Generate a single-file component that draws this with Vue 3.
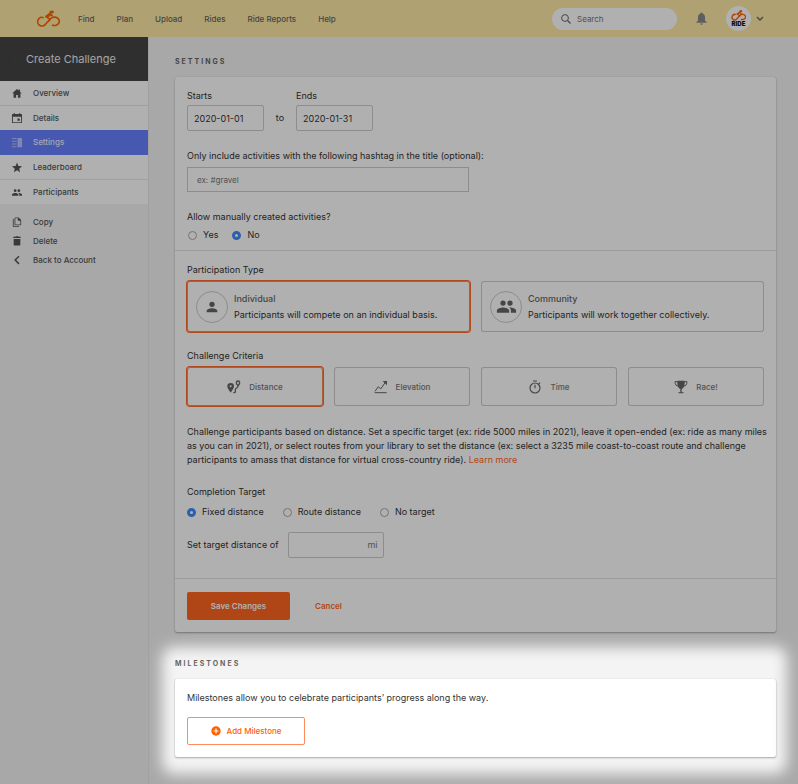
<script setup>
import { ref } from 'vue'

const nav = ['Find', 'Plan', 'Upload', 'Rides', 'Ride Reports', 'Help']
const items = [
  { name: 'Overview', icon: 'home' },
  { name: 'Details', icon: 'calendar' },
  { name: 'Settings', icon: 'reader' },
  { name: 'Leaderboard', icon: 'star' },
  { name: 'Participants', icon: 'group' }
]
const actions = [
  { name: 'Copy', icon: 'copy' },
  { name: 'Delete', icon: 'trash' },
  { name: 'Back to Account', icon: 'back' }
]
const icons = {
  home: 'M12 2 1.500 11.500h3V21h5.500v-6h4v6h5.500v-9.500h3L18.500 8V3.500h-3v1.700z',
  calendar: 'M18 12h-5v5h5v-5zM17 0v2H7V0H5v2H3a2 2 0 0 0-2 2v16a2 2 0 0 0 2 2h18a2 2 0 0 0 2-2V4a2 2 0 0 0-2-2h-2V0h-2zm4 20H3V8h18v12z',
  reader: 'M1 2h10v2.500H1zm0 6h10v2.500H1zm0 6h10v2.500H1zm0 6h10v2.500H1zM13 2h10v20.500H13z',
  star: 'M12 18 18.800 22.500l-2-8L23 9.200l-8-.6L12 1 9 8.600 1 9.200l6.200 5.300-2 8z',
  group: 'M16 11a3 3 0 1 0 0-6 3 3 0 0 0 0 6zm-8 0a3 3 0 1 0 0-6 3 3 0 0 0 0 6zm0 2c-2.300 0-7 1.200-7 3.500V19h14v-2.500C15 14.200 10.300 13 8 13zm8 0-1 .1c1.200.8 2 2 2 3.400V19h6v-2.500c0-2.300-4.700-3.500-7-3.500z',
  copy: 'M8 1h8l6 6v11a2 2 0 0 1-2 2H8a2 2 0 0 1-2-2V3a2 2 0 0 1 2-2zm0 2v15h12V9h-6V3H8zM2 5h2v17h13v2H4a2 2 0 0 1-2-2V5z',
  trash: 'M4 7h16v14a2 2 0 0 1-2 2H6a2 2 0 0 1-2-2V7zM3 2h5l1-1.500h6L16 2h5v3H3z',
  back: 'M15.500 1.500 18 4l-8 8 8 8-2.500 2.500L5 12z',
  person: 'M12 12a4 4 0 1 0 0-8 4 4 0 0 0 0 8zm0 2c-2.700 0-8 1.300-8 4v2h16v-2c0-2.700-5.300-4-8-4z'
}
const types = [
  { name: 'Individual', icon: 'person', text: 'Participants will compete on an individual basis.' },
  { name: 'Community', icon: 'group', text: 'Participants will work together collectively.' }
]
const criteria = ['Distance', 'Elevation', 'Time', 'Race!']
const targets = ['Fixed distance', 'Route distance', 'No target']

const starts = ref('2020-01-01')
const ends = ref('2020-01-31')
const manual = ref('No')
const type = ref('Individual')
const criterion = ref('Distance')
const target = ref('Fixed distance')
</script>

<template>
  <div class="page">
    <header class="topbar">
      <a href="#" class="logo" aria-label="Home">
        <svg viewBox="0 0 72 52" fill="none" stroke="currentColor" stroke-width="5">
          <path d="M23 22A13 13 0 1 0 29 41L42 27 30 19 41 11 50 17" stroke-linejoin="round" />
          <path d="M40 33A15 12.500 0 1 1 48 44" />
          <path d="M27 19 41 8 47 11 37 21z" fill="currentColor" stroke-width="2" />
          <ellipse cx="47" cy="5" rx="7" ry="4.500" fill="currentColor" stroke="none" />
        </svg>
      </a>
      <nav class="nav"><a v-for="n in nav" :key="n" href="#">{{ n }}</a></nav>
      <label class="search">
        <svg viewBox="0 0 10 10" fill="none" stroke="currentColor"><circle cx="4" cy="4" r="3.400" /><path d="m6.500 6.500 3 3" stroke-width="1.200" /></svg>
        <input type="search" placeholder="Search" aria-label="Search" />
      </label>
      <button class="bell" aria-label="Notifications">
        <svg viewBox="0 0 24 24" fill="currentColor"><path d="M12 1c1 0 1.800.7 1.800 1.700 3 .8 4.700 3.500 4.700 6.800v6.500l3 2.500v1.500h-19v-1.500l3-2.500V9.500c0-3.300 1.700-6 4.700-6.800C10.200 1.700 11 1 12 1zM9.500 21h5a2.500 2.500 0 0 1-5 0z" /></svg>
      </button>
      <button class="account" aria-label="Account">
        <span class="avatar">
          <svg viewBox="0 0 72 52" fill="none" stroke="currentColor" stroke-width="7">
            <path d="M23 22A13 13 0 1 0 29 41L42 27 30 19 41 11 50 17" />
            <path d="M40 33A15 12.500 0 1 1 48 44" />
            <ellipse cx="47" cy="5" rx="7" ry="5" fill="currentColor" stroke="none" />
          </svg>
          <b>RIDE</b>
        </span>
        <svg class="chev" viewBox="0 0 8 6" fill="none" stroke="currentColor" stroke-width="1.400"><path d="m1 1 3 3 3-3" /></svg>
      </button>
    </header>

    <div class="body">
      <aside class="side">
        <h1 class="title">
          <svg viewBox="0 0 148 43" preserveAspectRatio="none" fill="none" stroke="currentColor">
            <path d="M0 8Q12 12 17 0M0 17Q20 16 27 0M0 26Q28 20 38 0M40 43Q50 24 72 30T104 43M28 43Q44 14 74 22T116 43M148 4Q120 0 117 18T132 43M148 11Q127 8 124 22T140 43M148 18Q134 17 132 26T147 43M108 0Q106 24 124 43M98 0Q96 20 116 43" />
          </svg>
          <span>Create Challenge</span>
        </h1>
        <nav class="menu">
          <a v-for="i in items" :key="i.name" href="#" :class="{ active: i.name === 'Settings' }">
            <svg viewBox="0 0 24 24" fill="currentColor"><path :d="icons[i.icon]" fill-rule="evenodd" /></svg>{{ i.name }}
          </a>
        </nav>
        <nav class="actions">
          <a v-for="a in actions" :key="a.name" href="#">
            <svg viewBox="0 0 24 24" fill="currentColor"><path :d="icons[a.icon]" fill-rule="evenodd" /></svg>{{ a.name }}
          </a>
        </nav>
      </aside>

      <main class="main">
        <section>
          <h2>Settings</h2>
          <form class="card" @submit.prevent>
            <div class="part first">
              <div class="dates">
                <div class="field"><label for="starts">Starts</label><input id="starts" v-model="starts" type="text" /></div>
                <span class="to">to</span>
                <div class="field"><label for="ends">Ends</label><input id="ends" v-model="ends" type="text" /></div>
              </div>
              <label class="line gap" for="tag">Only include activities with the following hashtag in the title (optional):</label>
              <input id="tag" class="tag" type="text" placeholder="ex: #gravel" />
              <p class="line gap">Allow manually created activities?</p>
              <div class="radios manual">
                <label v-for="m in ['Yes', 'No']" :key="m"><input v-model="manual" type="radio" name="manual" :value="m" />{{ m }}</label>
              </div>
            </div>

            <div class="part second">
              <p class="line">Participation Type</p>
              <div class="types">
                <button v-for="t in types" :key="t.name" type="button" class="option type" :class="{ on: type === t.name }" :aria-pressed="type === t.name" @click="type = t.name">
                  <span class="disc" :class="t.icon"><svg viewBox="0 0 24 24" fill="currentColor"><path :d="icons[t.icon]" /></svg></span>
                  <span class="words"><span class="name">{{ t.name }}</span><span>{{ t.text }}</span></span>
                </button>
              </div>
              <p class="line gap">Challenge Criteria</p>
              <div class="criteria">
                <button v-for="c in criteria" :key="c" type="button" class="option criterion" :class="{ on: criterion === c }" :aria-pressed="criterion === c" @click="criterion = c">
                  <svg v-if="c === 'Distance'" viewBox="0 0 42 42">
                    <path d="M11 9a10 10 0 0 1 10 10c0 7-10 19-10 19S1 26 1 19A10 10 0 0 1 11 9zm0 7a3 3 0 1 0 0 6 3 3 0 0 0 0-6z" fill="currentColor" fill-rule="evenodd" />
                    <path d="M33 3a5 5 0 0 1 5 5c0 4-5 9-5 9s-5-5-5-9a5 5 0 0 1 5-5zM33 19c0 6-8 4-8 10 0 5 2 9-6 9" fill="none" stroke="currentColor" stroke-width="4" />
                  </svg>
                  <svg v-else-if="c === 'Elevation'" viewBox="0 0 42 42" fill="none" stroke="currentColor" stroke-width="3">
                    <path d="M2 38h36M3 34l10-14 7 7L34 7" /><path d="M26 3h13v13z" fill="currentColor" stroke="none" />
                  </svg>
                  <svg v-else-if="c === 'Time'" viewBox="0 0 42 42" fill="none" stroke="currentColor" stroke-width="3.500">
                    <circle cx="21" cy="24" r="15" /><path d="M15 3h12M21 14v11M32 12l4-4" />
                  </svg>
                  <svg v-else viewBox="0 0 42 42">
                    <path d="M10 2h22v8c0 11-5 16-9 17v10h6v3H13v-3h6V27c-4-1-9-6-9-17z" fill="currentColor" />
                    <path d="M11 5H3c0 9 4 13 10 13M31 5h8c0 9-4 13-10 13" fill="none" stroke="currentColor" stroke-width="3" />
                  </svg>
                  {{ c }}
                </button>
              </div>
              <p class="about">
                Challenge participants based on distance. Set a specific target (ex: ride 5000 miles in 2021), leave it open-ended (ex: ride as many miles as you can in 2021), or select routes from your library to set the distance (ex: select a 3235 mile coast-to-coast route and challenge participants to amass that distance for virtual cross-country ride). <a href="#">Learn more</a>
              </p>
              <p class="line gap">Completion Target</p>
              <div class="radios target">
                <label v-for="t in targets" :key="t"><input v-model="target" type="radio" name="target" :value="t" />{{ t }}</label>
              </div>
              <div class="distance">
                <label for="dist">Set target distance of</label>
                <span class="unit"><input id="dist" type="text" /><span>mi</span></span>
              </div>
            </div>

            <div class="foot">
              <button class="save" type="submit">Save Changes</button>
              <a href="#">Cancel</a>
            </div>
          </form>
        </section>

        <section class="milestones">
          <h2>Milestones</h2>
          <div class="card inner">
            <p class="line">Milestones allow you to celebrate participants’ progress along the way.</p>
            <button class="add">
              <svg viewBox="0 0 10 10"><circle cx="5" cy="5" r="4.700" fill="currentColor" /><path d="M5 2.500v5M2.500 5h5" stroke="#fff" stroke-width="1.200" /></svg>
              Add Milestone
            </button>
          </div>
        </section>
      </main>
    </div>
  </div>
</template>

<style>
body { margin: 0; background: #f4f4f4; }
</style>

<style scoped>
* { box-sizing: border-box; }
.page {
  position: relative;
  display: flex;
  flex-direction: column;
  min-height: 100vh;
  overflow: hidden;
  background: #f4f4f4;
  color: #333;
  font: 9px/14px Inter, "Liberation Sans", sans-serif;
}
a { color: inherit; text-decoration: none; }
p, h1, h2 { margin: 0; }
button, input { font: inherit; color: inherit; }
button { padding: 0; border: 0; background: none; cursor: pointer; }
svg { flex: none; display: block; }

.topbar { display: flex; align-items: center; height: 37px; padding: 0 34px 0 36px; background: #ffeaa5; color: #666; }
.logo { color: #ff6400; }
.logo svg { width: 24px; height: 18px; }
.nav { display: flex; gap: 22px; margin-left: 18px; font-size: 8px; font-weight: 500; }
.search { display: flex; align-items: center; gap: 6px; width: 125px; height: 22px; margin-left: auto; padding: 0 9px; border-radius: 11px; background: #fff; }
.search svg { width: 10px; height: 10px; }
.search input { flex: 1; min-width: 0; padding: 0; border: 0; outline: 0; background: none; font-size: 8px; }
.bell { margin-left: 18px; color: #888; }
.bell svg { width: 13px; height: 13px; }
.account { display: flex; align-items: center; gap: 5px; margin-left: 18px; }
.avatar { display: flex; flex-direction: column; align-items: center; justify-content: center; width: 25px; height: 25px; border-radius: 50%; background: #fff; color: #ff6400; }
.avatar svg { width: 15px; height: 11px; }
.avatar b { color: #111; font-size: 6px; line-height: 6px; font-weight: 900; }
.chev { width: 8px; height: 6px; }

.body { display: flex; flex: 1; }
.side { flex: none; width: 149px; border-right: 1px solid #e8e8e8; color: #555; font-size: 8px; font-weight: 500; }
.title { display: grid; align-items: center; height: 44px; background: #444; color: #eee; font-size: 11px; font-weight: 400; }
.title > * { grid-area: 1 / 1; }
.title svg { width: 100%; height: 100%; color: #494949; }
.title span { padding-left: 26px; }
.menu { background: #fff; }
.menu a { display: flex; align-items: center; gap: 10px; height: 25px; padding-left: 11px; border-bottom: 1px solid #e6e6e6; }
.menu a:has(+ .active), .menu a:last-child { height: 24px; border-bottom: 0; }
.menu .active { border-color: #6880ff; background: #6880ff; color: #eef; }
.side svg { width: 12px; height: 11px; }
.menu .active svg { opacity: .6; }
.actions { display: flex; flex-direction: column; gap: 5px; padding-top: 11px; }
.actions a { display: flex; align-items: center; gap: 10px; padding-left: 11px; }
.actions svg { height: 10px; }

.main { flex: 1; min-width: 0; padding: 18px 22px 26px 26px; }
h2 { margin-bottom: 8px; color: #666; font-size: 7px; line-height: 14px; font-weight: 700; letter-spacing: 2px; text-transform: uppercase; }
.card { border-radius: 2px; background: #fff; box-shadow: 0 1px 2px rgba(0, 0, 0, .3), 0 0 1px rgba(0, 0, 0, .2); }
.part { padding: 12px 12px 8px; border-bottom: 1px solid #e2e2e2; }
.part.second { padding-bottom: 20px; }
.line { display: block; }
.gap { margin-top: 18px; }
input[type="text"] { display: block; height: 26px; padding: 0 6px; border: 1px solid #ccc; border-radius: 2px; background: #fff; outline: 0; }
.dates { display: flex; align-items: flex-end; }
.field { width: 77px; }
.field label { display: block; }
.field input { width: 100%; margin-top: 2px; }
.to { width: 32px; text-align: center; line-height: 26px; }
input.tag { width: 282px; max-width: 100%; height: 25px; margin-top: 4px; padding: 0 9px; border-radius: 0; font-size: 8px; }
::placeholder { color: #777; opacity: 1; }
.radios { display: flex; }
.radios label { display: flex; align-items: center; gap: 6px; }
.radios input { appearance: none; width: 9px; height: 9px; margin: 0; border: 1px solid #aaa; border-radius: 50%; background: #fff; }
.radios input:checked { border: 3px solid #3d8bff; }
.manual { gap: 14px; margin-top: 4px; padding-left: 1px; }
.target { gap: 19px; margin-top: 6px; }
.types, .criteria { display: grid; gap: 11px; margin-top: 4px; }
.types { grid-template-columns: repeat(2, 1fr); }
.types + .gap { margin-top: 17px; }
.criteria { grid-template-columns: repeat(4, 1fr); }
.option { display: flex; align-items: center; border-radius: 3px; background: #fff; box-shadow: inset 0 0 0 1px #ccc; text-align: left; }
.option.on { box-shadow: inset 0 0 0 1px #ff8850, 0 0 0 1px #ff6a2a; }
.type { gap: 6px; height: 51px; padding: 0 9px; }
.disc { display: grid; place-items: center; flex: none; width: 32px; height: 32px; border: 1px solid #ccc; border-radius: 50%; color: #666; }
.disc svg { width: 16px; height: 16px; }
.disc.group svg { width: 21px; height: 21px; }
.words { display: flex; flex-direction: column; gap: 2px; }
.name { color: #666; font-weight: 500; }
.criterion { justify-content: center; gap: 8px; height: 39px; color: #777; font-size: 8px; font-weight: 500; }
.criterion svg { width: 14px; height: 14px; color: #666; }
.about { margin: 19px -8px 0 0; }
.about a, .foot a { color: #ff6a1a; }
.distance { display: flex; align-items: center; gap: 10px; margin-top: 13px; }
.unit { position: relative; width: 96px; }
.unit input { width: 100%; }
.unit span { position: absolute; right: 7px; top: 6px; color: #777; }
.foot { display: flex; align-items: center; gap: 25px; padding: 13px 12px 12px; font-size: 8px; font-weight: 600; }
.save { width: 103px; height: 28px; border-radius: 2px; background: #ff6421; color: #fff; }
.milestones { position: relative; margin-top: 25px; }
/* Dims the whole page except a soft-edged window round this section. */
.milestones::after {
  content: "";
  position: absolute;
  z-index: 10;
  inset: -2010px -2011px -2017px -2013px;
  border-radius: 2012px;
  box-shadow: inset 0 0 14px 2000px rgba(0, 0, 0, .31);
  pointer-events: none;
}
.inner { padding: 12px; }
.add { display: flex; align-items: center; justify-content: center; gap: 6px; width: 118px; height: 28px; margin-top: 12px; border: 1px solid #ff8a5c; border-radius: 2px; color: #ff5f00; font-size: 8px; font-weight: 500; }
.add svg { width: 10px; height: 10px; }
</style>
